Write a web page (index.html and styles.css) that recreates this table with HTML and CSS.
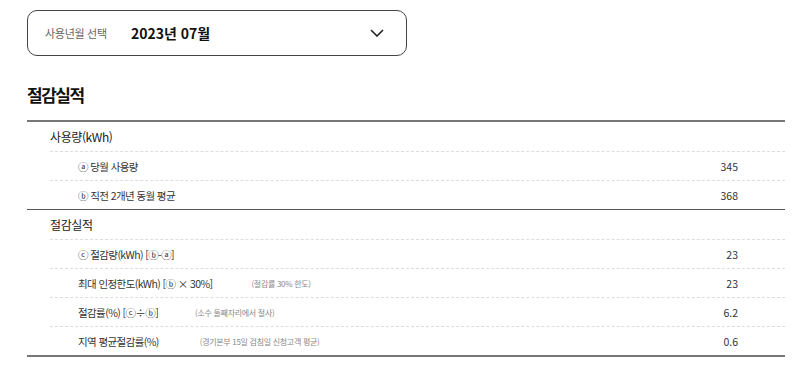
FILE: index.html
```html
<!DOCTYPE html>
<html lang="ko">

<head>
    <meta charset="UTF-8">
    <title>절감실적</title>
    <link rel="stylesheet" href="styles.css">
</head>

<body>
<div id="page">
    <div class="month-select">
        <span class="month-label">사용년월 선택</span>
        <span class="month-value">2023년 07월</span>
        <svg class="month-arrow" width="14" height="8" viewBox="0 0 14 8">
            <path d="M1 1 L7 7 L13 1" fill="none" stroke="#222" stroke-width="1.6"/>
        </svg>
    </div>

    <h2 class="page-title">절감실적</h2>

    <div class="result-table">
        <!-- 사용량 -->
        <div class="group">
            <div class="group-head">사용량(kWh)</div>
            <div class="row">
                <span class="row-name">ⓐ 당월 사용량</span>
                <span class="row-value">345</span>
            </div>
            <div class="row">
                <span class="row-name">ⓑ 직전 2개년 동월 평균</span>
                <span class="row-value">368</span>
            </div>
        </div>

        <!-- 절감실적 -->
        <div class="group">
            <div class="group-head">절감실적</div>
            <div class="row">
                <span class="row-name">ⓒ 절감량(kWh) [ⓑ-ⓐ]</span>
                <span class="row-value">23</span>
            </div>
            <div class="row">
                <span class="row-name">최대 인정한도(kWh) [ⓑ × 30%]</span>
                <span class="row-note note-1">(절감률 30% 한도)</span>
                <span class="row-value">23</span>
            </div>
            <div class="row">
                <span class="row-name">절감률(%) [ⓒ÷ⓑ]</span>
                <span class="row-note note-2">(소수 둘째자리에서 절사)</span>
                <span class="row-value">6.2</span>
            </div>
            <div class="row">
                <span class="row-name">지역 평균절감률(%)</span>
                <span class="row-note note-3">(경기본부 15일 검침일 신청고객 평균)</span>
                <span class="row-value">0.6</span>
            </div>
        </div>
    </div>
</div>
</body>

</html>
```

FILE: styles.css
```css
body {
    margin: 0;
    background-color: #fff;
    color: #222;
    font-family: "Noto Sans CJK KR", "Noto Sans", sans-serif;
}

#page {
    padding: 10px 15px 0 27px;
}

.month-select {
    width: 339px;
    height: 44px;
    border: 1px solid #444;
    border-radius: 10px;
    display: flex;
    align-items: center;
    padding: 0 22px 0 17px;
}

.month-label {
    font-size: 11px;
    color: #666;
    width: 86px;
    letter-spacing: -0.3px;
}

.month-value {
    flex: 1;
    font-size: 14px;
    font-weight: 700;
    color: #111;
}

.month-arrow {
    display: block;
}

.page-title {
    margin: 26px 0 0 0;
    font-size: 17px;
    font-weight: 700;
    line-height: 26px;
    color: #111;
    letter-spacing: -1.5px;
}

.result-table {
    margin-top: 12px;
    width: 758px;
    border-bottom: 2px solid #777;
}

.group {
    border-top: 2px solid #777;
    padding-left: 23px;
}

.group + .group {
    border-top-width: 1px;
    border-top-color: #555;
}

.group-head {
    height: 29px;
    line-height: 29px;
    font-size: 12px;
    color: #222;
    letter-spacing: -0.4px;
    border-bottom: 1px dashed #ddd;
}

.row {
    display: flex;
    align-items: center;
    height: 28px;
    padding-left: 28px;
    padding-right: 47px;
    font-size: 10.5px;
    color: #333;
    border-bottom: 1px dashed #ddd;
}

.row:last-child {
    border-bottom: none;
}

.row-name {
    letter-spacing: -0.6px;
}

.row-note {
    font-size: 8px;
    color: #888;
    letter-spacing: -0.3px;
}

.note-1 {
    margin-left: 39px;
}

.note-2 {
    margin-left: 37px;
}

.note-3 {
    margin-left: 41px;
}

.row-value {
    margin-left: auto;
}
```
